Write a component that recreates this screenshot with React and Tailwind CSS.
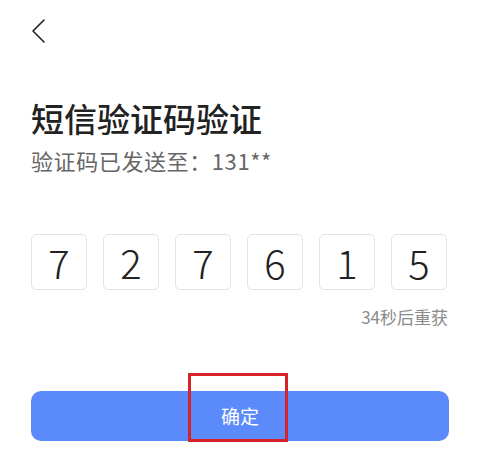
import React from 'react';

const digits = ['7', '2', '7', '6', '1', '5'];

function BackIcon() {
  return (
    <svg width="16" height="26" viewBox="0 0 16 26" fill="none">
      <path d="M13 2 L2 13 L13 24" stroke="#222" strokeWidth="1.6" strokeLinecap="round" strokeLinejoin="round" />
    </svg>
  );
}

export default function App() {
  return (
    <div
      className="w-[480px] h-[451px] bg-white overflow-hidden pl-[31px] pr-[32px]"
      style={{ fontFamily: '"Noto Sans CJK SC", "Noto Sans", sans-serif' }}
    >
      <div className="pt-[18px] h-[50px]">
        <BackIcon />
      </div>

      <h1 className="mt-[48px] text-[33px] leading-[40px] font-medium text-[#222]">短信验证码验证</h1>
      <p className="mt-[8px] text-[22px] leading-[28px] tracking-[0.6px] text-[#666]">验证码已发送至：131**</p>

      <div className="mt-[60px] flex gap-[16px]">
        {digits.map((d, i) => (
          <div
            key={i}
            className="w-[56px] h-[56px] border border-[#e3e3e3] rounded-[5px] flex items-center justify-center text-[40px] font-light text-[#222]"
          >
            {d}
          </div>
        ))}
      </div>

      <div className="mt-[16px] flex justify-end text-[17px] leading-[22px] text-[#8a8a8a]">34秒后重获</div>

      <div className="relative mt-[63px]">
        <button className="w-[418px] h-[50px] rounded-[10px] bg-[#5b8bfa] text-white text-[19px] flex items-center justify-center">
          确定
        </button>
        <div className="absolute left-[157px] top-[-18px] w-[100px] h-[69px] border-[3px] border-[#d6232a] pointer-events-none" />
      </div>
    </div>
  );
}
